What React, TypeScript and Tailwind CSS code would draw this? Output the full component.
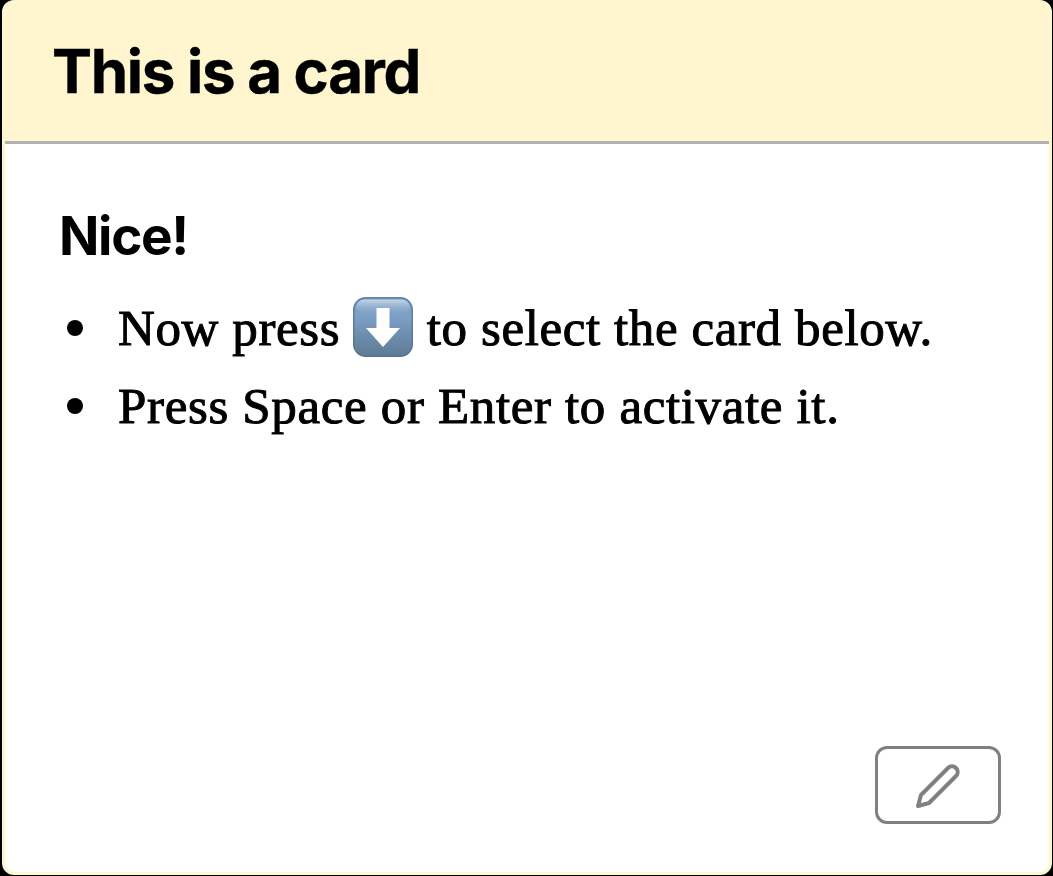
import React from "react";

function DownKey() {
  return (
    <svg role="img" aria-label="Down arrow" viewBox="0 0 60 60" className="h-[60px] w-[60px] shrink-0 -translate-y-px">
      <defs>
        <linearGradient id="key" x1="0" y1="0" x2="0" y2="1">
          <stop offset="0" stopColor="#7094bb" />
          <stop offset="0.3" stopColor="#7da0c7" />
          <stop offset="1" stopColor="#5e7a95" />
        </linearGradient>
        <linearGradient id="shine" x1="0" y1="0" x2="0" y2="1">
          <stop offset="0" stopColor="#dce8f2" stopOpacity="0.8" />
          <stop offset="1" stopColor="#a5bfd9" stopOpacity="0" />
        </linearGradient>
        <linearGradient id="rim" x1="0" y1="0" x2="0" y2="1">
          <stop offset="0" stopColor="#6084ab" />
          <stop offset="1" stopColor="#56728d" />
        </linearGradient>
      </defs>
      <rect x="0.75" y="0.75" width="58.5" height="58.5" rx="12" fill="url(#key)" stroke="url(#rim)" strokeWidth="1.5" />
      <rect x="3" y="2.5" width="54" height="15" rx="9" fill="url(#shine)" />
      <path d="M23.5 11H36.5V31H47L30 50L13 31H23.5Z" fill="white" />
    </svg>
  );
}

function PencilIcon() {
  return (
    <svg viewBox="0 0 24 24" className="size-12 translate-y-px" fill="none" stroke="currentColor" strokeWidth="2" strokeLinejoin="round">
      <path d="M17 3a2.828 2.828 0 1 1 4 4L7.5 20.5 2 22l1.5-5.5L17 3z" />
    </svg>
  );
}

export default function App() {
  return (
    <main className="h-[876px] w-[1053px] bg-black pl-[2px] pr-px">
      <article className="flex h-[875px] flex-col overflow-hidden rounded-[12px] border-[3px] border-[#fff6d0] bg-white text-black">
        <header className="h-[141px] shrink-0 border-b-[3px] border-[#b1b1b1] bg-[#fff6d0] pl-[47px] pt-[31px]">
          <h1 className="font-['Inter',sans-serif] text-[60px] font-bold leading-[74px] tracking-[-1.3px] [-webkit-text-stroke:0.4px_black]">This is a card</h1>
        </header>
        <section className="flex flex-1 flex-col pl-[54px] pt-[59px]">
          <h2 className="font-['Inter',sans-serif] text-[53px] font-bold leading-[66px] tracking-[-1.3px]">Nice!</h2>
          <ul className="mt-[20px] pl-[8px] font-['Liberation_Serif',serif] text-[51px] leading-[78px] tracking-[0.6px] [-webkit-text-stroke:1px_black]">
            <li className="flex h-[78px] items-center whitespace-pre"><span className="mr-[35px] size-[16px] rounded-full bg-black" />Now press <DownKey /> to select the card below.</li>
            <li className="flex h-[78px] items-center tracking-[0.65px]"><span className="mr-[35px] size-[16px] rounded-full bg-black" />Press Space or Enter to activate it.</li>
          </ul>
          <button aria-label="Edit" className="mb-[48px] mr-[48px] mt-auto flex h-[78px] w-[126px] items-center justify-center self-end rounded-[12px] border-[3px] border-[#808080] text-[#808080]">
            <PencilIcon />
          </button>
        </section>
      </article>
    </main>
  );
}
